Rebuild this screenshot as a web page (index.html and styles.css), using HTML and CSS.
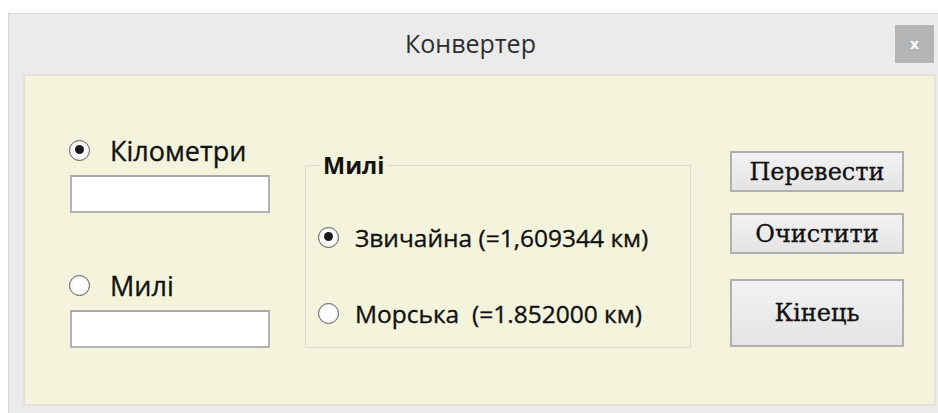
FILE: index.html
```html
<!DOCTYPE html>
<html lang="uk">
<head>
<meta charset="utf-8">
<title>Конвертер</title>
<link rel="stylesheet" href="styles.css">
</head>
<body>
<div class="window">
  <div class="titlebar">
    <span class="title">Конвертер</span>
    <button class="close" type="button">x</button>
  </div>
  <div class="client">
    <div class="units">
      <label class="option unit"><span class="radio checked"></span>Кілометри</label>
      <div class="field"></div>
      <label class="option unit option-miles"><span class="radio"></span>Милі</label>
      <div class="field"></div>
    </div>
    <fieldset class="group">
      <legend>Милі</legend>
      <div class="choices">
        <label class="option"><span class="radio checked"></span>Звичайна (=1,609344 км)</label>
        <label class="option"><span class="radio"></span>Морська&nbsp; (=1.852000 км)</label>
      </div>
    </fieldset>
    <div class="actions">
      <button class="btn" type="button">Перевести</button>
      <button class="btn" type="button">Очистити</button>
      <button class="btn btn-tall" type="button">Кінець</button>
    </div>
  </div>
</div>
</body>
</html>
```

FILE: styles.css
```css
html, body {
  margin: 0;
  background: #ffffff;
}

body {
  font-family: "Open Sans", "Noto Sans", sans-serif;
  color: #111111;
}

.window {
  margin: 13px 0 0 8px;
  width: 930px;
  height: 400px;
  box-sizing: border-box;
  background: #ebebeb;
  border-top: 1px solid #d8d8d8;
  border-left: 1px solid #d8d8d8;
  padding: 0 2px 0 14px;
  display: flex;
  flex-direction: column;
}

/* caption row: centred title, close box on the right */
.titlebar {
  height: 60px;
  display: grid;
  grid-template-columns: 1fr auto 1fr;
  align-items: center;
  margin-left: -14px;
  margin-right: -2px;
}

.title {
  grid-column: 2;
  font-size: 25px;
  color: #2e2e2e;
  padding: 0 6px 3px 0;
}

.close {
  grid-column: 3;
  justify-self: end;
  margin-right: 4px;
  width: 39px;
  height: 38px;
  border: 0;
  padding: 0;
  background: #b4b4b4;
  color: #ffffff;
  font: bold 14px "DejaVu Sans", sans-serif;
}

/* cream client area of the form */
.client {
  height: 332px;
  box-sizing: border-box;
  background: #f4f4dc;
  border: 2px solid #e2e2d6;
  display: flex;
  align-items: flex-start;
  padding: 59px 0 0 45px;
}

.units {
  width: 200px;
  display: flex;
  flex-direction: column;
}

.option {
  display: flex;
  align-items: center;
  height: 30px;
  font-size: 24.5px;
  white-space: nowrap;
  -webkit-text-stroke: 0.35px #111111;
}

.option.unit {
  font-size: 27px;
}

.option-miles {
  margin-top: 57px;
}

.radio {
  flex: none;
  width: 21px;
  height: 21px;
  box-sizing: border-box;
  border-radius: 50%;
  border: 1.5px solid #5c5c5c;
  background: radial-gradient(circle, #ffffff 50%, #d6d6d6 100%);
  margin: 0 20px 0 -1px;
  position: relative;
}

.radio.checked::after {
  content: "";
  position: absolute;
  left: 4.5px;
  top: 4.5px;
  width: 9px;
  height: 9px;
  border-radius: 50%;
  background: #1a1a1a;
}

.field {
  margin-top: 10px;
  height: 38px;
  box-sizing: border-box;
  background: #ffffff;
  border: 2px solid #b4b4b4;
  border-top-color: #a8a8a8;
}

/* "Милі" group box */
.group {
  margin: 16px 0 0 35px;
  width: 386px;
  box-sizing: border-box;
  border: 1px solid #dcdcd6;
  padding: 0 0 19px 0;
  min-width: 0;
}

.group legend {
  margin-left: 15px;
  padding: 0 3px 0 2px;
  font-size: 23.5px;
  font-weight: bold;
  line-height: 28px;
}

.choices {
  display: flex;
  flex-direction: column;
  gap: 46px;
  padding: 43px 0 0 13px;
}

.choices .radio {
  margin-right: 16px;
}

.actions {
  margin: 16px 0 0 39px;
  width: 174px;
  display: flex;
  flex-direction: column;
}

.btn {
  height: 41px;
  box-sizing: border-box;
  border: 2px solid #b0b0b0;
  background: linear-gradient(#f2f2f2, #e4e4e4);
  font-family: "DejaVu Serif", "Liberation Serif", serif;
  font-size: 24px;
  color: #111111;
  padding: 0;
  -webkit-text-stroke: 0.3px #111111;
}

.btn + .btn {
  margin-top: 21px;
}

.btn-tall {
  height: 68px;
  margin-top: 25px !important;
}
```
